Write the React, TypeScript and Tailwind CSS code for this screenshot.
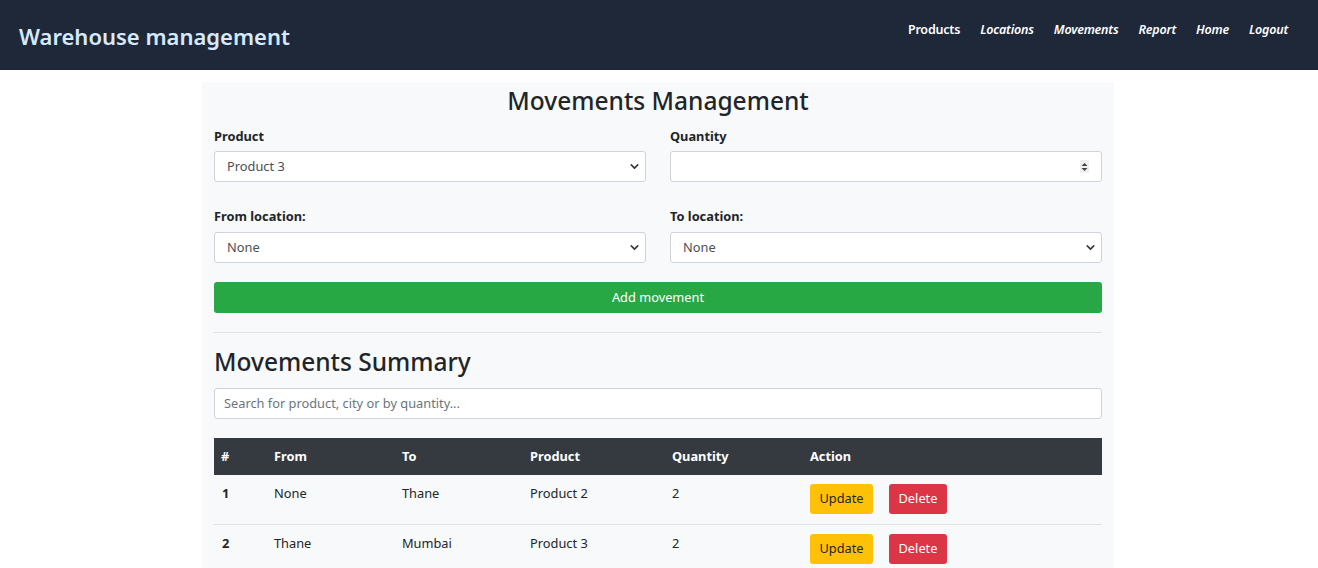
import { ChevronDown } from "lucide-react";

const font = { fontFamily: '"Noto Sans", "Open Sans", sans-serif' };

const links = [
  { label: "Products", italic: false },
  { label: "Locations", italic: true },
  { label: "Movements", italic: true },
  { label: "Report", italic: true },
  { label: "Home", italic: true },
  { label: "Logout", italic: true },
];

const rows = [
  { id: 1, from: "None", to: "Thane", product: "Product 2", qty: 2 },
  { id: 2, from: "Thane", to: "Mumbai", product: "Product 3", qty: 2 },
];

function Select({ value, className = "" }: { value: string; className?: string }) {
  return (
    <div className={`relative h-[31px] w-full rounded-[3px] border border-[#ced4da] bg-white ${className}`}>
      <div className="flex h-full items-center pl-[12px] text-[12.8px] text-[#495057]">
        {value}
      </div>
      <ChevronDown
        className="absolute right-[4px] top-[8px] h-[13px] w-[13px] text-[#343a40]"
        strokeWidth={3}
      />
    </div>
  );
}

function Field({ label, children }: { label: string; children: React.ReactNode }) {
  return (
    <div className="flex flex-1 flex-col">
      <label className="mb-[5px] text-[12.8px] font-bold leading-[19px] text-[#212529]">
        {label}
      </label>
      {children}
    </div>
  );
}

export default function App() {
  return (
    <div className="min-h-[568px] bg-white text-[#212529]" style={font}>
      {/* navbar */}
      <nav className="flex h-[70px] items-center justify-between bg-[#1f2838] pl-[19px] pr-[30px]">
        <span className="mt-[3px] text-[22px] font-semibold text-[#d6eaff]">
          Warehouse management
        </span>
        <ul className="mb-[10px] flex items-center gap-[20px]">
          {links.map((l) => (
            <li
              key={l.label}
              className={`text-[12.5px] font-semibold tracking-[-0.2px] text-white ${l.italic ? "italic" : ""}`}
            >
              {l.label}
            </li>
          ))}
        </ul>
      </nav>

      {/* card */}
      <div className="mx-auto mt-[12px] w-[912px] -translate-x-[1px] bg-[#f8f9fa] px-[12px] pb-[10px]">
        <h1 className="pt-[2px] text-center text-[24.5px] font-medium leading-[34px] text-[#212529]">
          Movements Management
        </h1>

        <div className="mt-[9px] flex gap-[24px]">
          <Field label="Product">
            <Select value="Product 3" />
          </Field>
          <Field label="Quantity">
            <div className="relative h-[31px] w-full rounded-[3px] border border-[#ced4da] bg-white">
              <div className="absolute right-[12px] top-[8px] flex h-[13px] w-[9px] flex-col items-center justify-center bg-[#efefef]">
                <svg width="7" height="10" viewBox="0 0 7 10">
                  <path d="M0.5 4 L3.5 1 L6.5 4 Z" fill="#444" />
                  <path d="M0.5 6 L3.5 9 L6.5 6 Z" fill="#444" />
                </svg>
              </div>
            </div>
          </Field>
        </div>

        <div className="mt-[25px] flex gap-[24px]">
          <Field label="From location:">
            <Select value="None" className="mt-[1px]" />
          </Field>
          <Field label="To location:">
            <Select value="None" className="mt-[1px]" />
          </Field>
        </div>

        <button className="mt-[19px] flex h-[31px] w-full items-center justify-center rounded-[3px] bg-[#28a745] text-[12.8px] text-white">
          Add movement
        </button>

        <hr className="mt-[19px] border-t border-[#dee2e6]" />

        <h2 className="mt-[12px] text-[24.5px] font-medium leading-[34px] text-[#212529]">
          Movements Summary
        </h2>

        <div className="mt-[9px] flex h-[31px] items-center rounded-[3px] border border-[#ced4da] bg-white pl-[9px] text-[12.8px] text-[#6c757d]">
          Search for product, city or by quantity...
        </div>

        <table className="mt-[19px] w-full border-collapse text-left text-[12.8px]">
          <thead>
            <tr className="h-[37px] bg-[#343a40] text-white">
              <th className="w-[52px] pl-[7px] font-bold">#</th>
              <th className="w-[128px] pl-[8px] font-bold">From</th>
              <th className="w-[128px] pl-[8px] font-bold">To</th>
              <th className="w-[142px] pl-[8px] font-bold">Product</th>
              <th className="w-[138px] pl-[8px] font-bold">Quantity</th>
              <th className="pl-[8px] font-bold">Action</th>
            </tr>
          </thead>
          <tbody>
            {rows.map((r) => (
              <tr key={r.id} className="border-b border-[#dee2e6] align-top last:border-b-0">
                <td className="pl-[8px] pt-[9px] font-bold leading-[19px]">{r.id}</td>
                <td className="pl-[8px] pt-[9px] leading-[19px]">{r.from}</td>
                <td className="pl-[8px] pt-[9px] leading-[19px]">{r.to}</td>
                <td className="pl-[8px] pt-[9px] leading-[19px]">{r.product}</td>
                <td className="pl-[8px] pt-[9px] leading-[19px]">{r.qty}</td>
                <td className="pb-[10px] pl-[8px] pt-[9px]">
                  <div className="flex gap-[16px]">
                    <button className="h-[30px] w-[63px] rounded-[3px] bg-[#ffc107] text-[12.8px] text-[#212529]">
                      Update
                    </button>
                    <button className="h-[30px] w-[58px] rounded-[3px] bg-[#dc3545] text-[12.8px] text-white">
                      Delete
                    </button>
                  </div>
                </td>
              </tr>
            ))}
          </tbody>
        </table>
      </div>
    </div>
  );
}
